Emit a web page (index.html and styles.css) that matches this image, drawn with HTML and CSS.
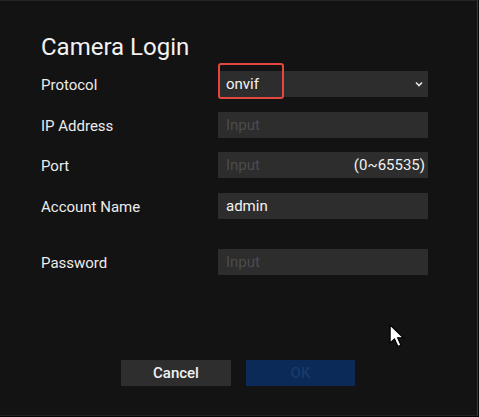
FILE: index.html
```html
<!DOCTYPE html>
<html>
<head>
<meta charset="utf-8">
<link rel="stylesheet" href="styles.css">
</head>
<body>
<div class="screen">
  <h1 class="title">Camera Login</h1>
  <div class="form">
    <div class="row">
      <span class="label">Protocol</span>
      <div class="field select">
        <span class="value">onvif</span>
        <svg class="chevron" width="8" height="6" viewBox="0 0 8 6"><path d="M1 1.5 L4 4.5 L7 1.5" fill="none" stroke="#e6e6e6" stroke-width="1.6"/></svg>
      </div>
    </div>
    <div class="row">
      <span class="label">IP Address</span>
      <div class="field"><span class="placeholder">Input</span></div>
    </div>
    <div class="row">
      <span class="label">Port</span>
      <div class="field"><span class="placeholder">Input</span><span class="range">(0~65535)</span></div>
    </div>
    <div class="row">
      <span class="label">Account Name</span>
      <div class="field"><span class="value">admin</span></div>
    </div>
    <div class="row row-gap">
      <span class="label">Password</span>
      <div class="field"><span class="placeholder">Input</span></div>
    </div>
  </div>
  <div class="actions">
    <button class="btn btn-cancel">Cancel</button>
    <button class="btn btn-ok">OK</button>
  </div>
  <div class="highlight"></div>
  <svg class="cursor" width="16" height="24" viewBox="0 0 14 21"><path d="M1 1 L1 16.5 L4.8 13 L7.8 19.6 L10.4 18.4 L7.5 12 L12.6 12 Z" fill="#fff" stroke="#000" stroke-width="1"/></svg>
</div>
</body>
</html>
```

FILE: styles.css
```css
html, body {
  margin: 0;
  padding: 0;
  background: #050505;
}
body {
  width: 479px;
  height: 417px;
  overflow: hidden;
  font-family: Roboto, "Liberation Sans", sans-serif;
}
.screen {
  position: relative;
  box-sizing: border-box;
  width: 478px;
  height: 416px;
  background: #131313;
  border-top: 1px solid #262626;
  border-right: 1px solid #3a3a3a;
  border-bottom: 1px solid #1e231e;
  padding: 32px 0 0 41px;
}
.title {
  margin: 0;
  font-size: 24px;
  line-height: 28px;
  font-weight: 400;
  color: #f2f2f2;
}
.form {
  display: flex;
  flex-direction: column;
  gap: 14.5px;
  margin-top: 10px;
}
.row {
  display: flex;
  align-items: center;
  height: 26px;
}
.row-gap {
  margin-top: 16px;
}
.label {
  width: 177px;
  font-size: 15px;
  color: #ececec;
  padding-top: 2px;
}
.field {
  box-sizing: border-box;
  width: 210px;
  height: 26px;
  background: #2d2d2d;
  display: flex;
  align-items: center;
  justify-content: space-between;
  padding: 0 3px 0 8px;
  font-size: 15px;
}
.select {
  padding-right: 5px;
}
.value {
  color: #f4f4f4;
}
.placeholder {
  color: #4c4c4c;
}
.range {
  color: #f0f0f0;
}
.chevron {
  display: block;
}
.actions {
  display: flex;
  gap: 15px;
  margin: 85px 0 0 80px;
}
.btn {
  width: 110px;
  height: 26px;
  border: none;
  font-family: Roboto, "Liberation Sans", sans-serif;
  font-size: 15px;
  font-weight: 500;
  padding: 0;
}
.btn-cancel {
  background: #2e2e2e;
  color: #f2f2f2;
}
.btn-ok {
  width: 109px;
  background: #0b2a57;
  color: #183a6c;
}
.highlight {
  position: absolute;
  left: 218px;
  top: 62px;
  width: 62px;
  height: 32px;
  border: 2px solid #e2483e;
  border-radius: 3px;
}
.cursor {
  position: absolute;
  left: 389px;
  top: 323px;
}
```
